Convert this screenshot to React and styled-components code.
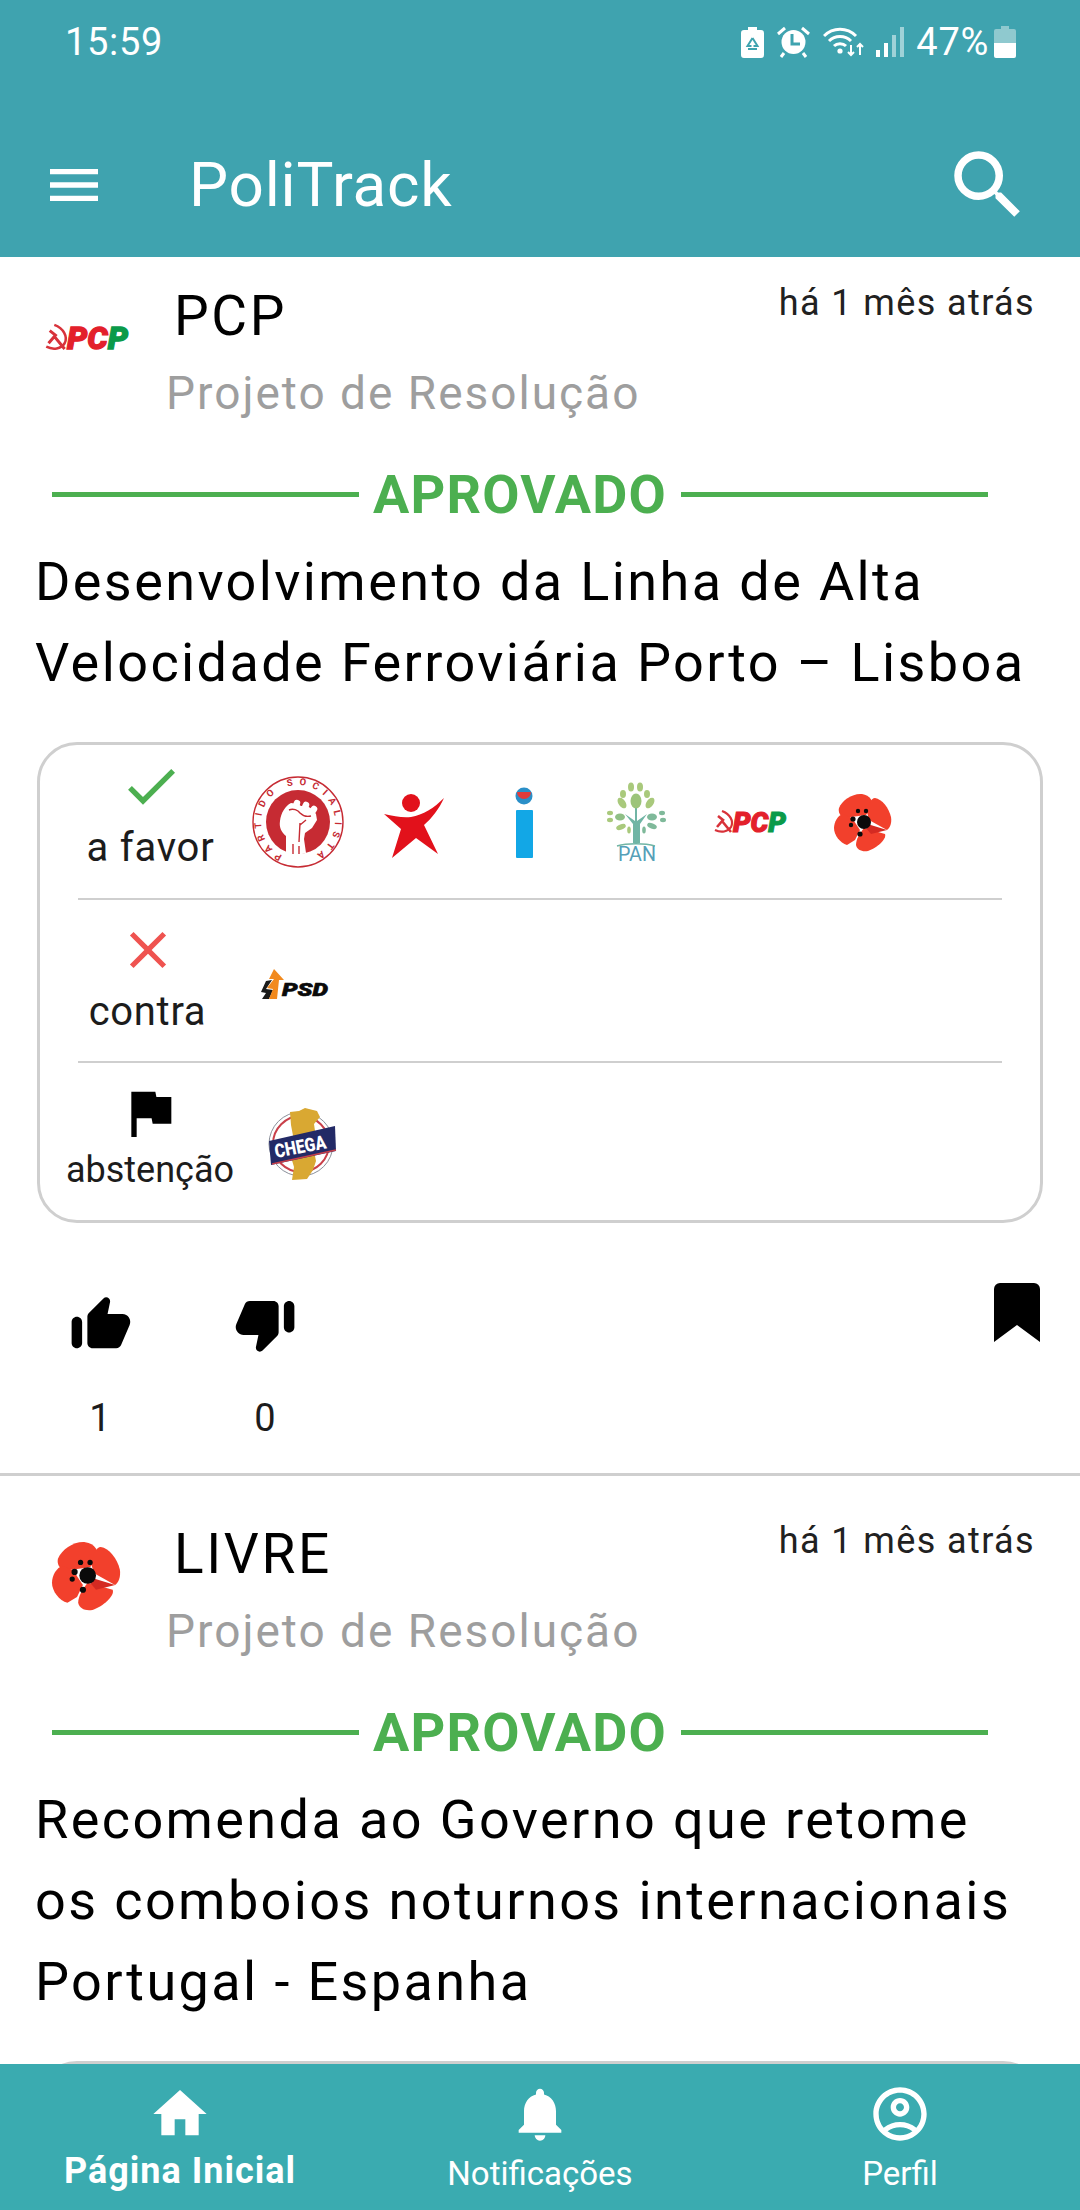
import React from "react";
import styled, { createGlobalStyle } from "styled-components";
import {
  MdMenu,
  MdSearch,
  MdHome,
  MdNotifications,
  MdOutlineAccountCircle,
  MdCheck,
  MdClose,
  MdFlag,
} from "react-icons/md";

const GlobalStyle = createGlobalStyle`
  html, body {
    margin: 0;
    padding: 0;
    background: #ffffff;
    font-family: Roboto, "Liberation Sans", sans-serif;
  }
  * { box-sizing: border-box; }
`;

const Screen = styled.div`
  width: 1080px;
  height: 2210px;
  display: flex;
  flex-direction: column;
  overflow: hidden;
  background: #ffffff;
  color: #000000;
`;

const Header = styled.header`
  flex: none;
  height: 257px;
  background: #3fa3af;
  color: #ffffff;
`;

const StatusBar = styled.div`
  height: 84px;
  padding: 0 64px 0 65px;
  display: flex;
  align-items: center;
  font-size: 38px;
  letter-spacing: 0.7px;
`;

const StatusIcons = styled.div`
  margin-left: auto;
  display: flex;
  align-items: center;
  gap: 12px;
`;

const Percent = styled.span`
  margin-left: 0;
  margin-right: -7px;
`;

const Toolbar = styled.div`
  height: 173px;
  padding: 28px 47px 0 42px;
  display: flex;
  align-items: center;
`;

const Brand = styled.div`
  margin-left: 83px;
  font-size: 62px;
  line-height: 70px;
  letter-spacing: 0.8px;
`;

const SearchButton = styled.div`
  margin-left: auto;
  display: flex;
`;

const Feed = styled.main`
  flex: 1;
  min-height: 0;
  overflow: hidden;
`;

const Card = styled.article`
  padding: ${(props) => props.$top}px 32px 0;
`;

const HeadRow = styled.div`
  display: flex;
  align-items: flex-start;
`;

const LogoSlot = styled.div`
  flex: none;
  width: 108px;
  height: 102px;
  margin-right: 26px;
  display: flex;
  align-items: center;
  justify-content: center;
`;

const HeadText = styled.div`
  flex: 1;
`;

const PartyName = styled.div`
  padding-left: 8px;
  font-size: 55px;
  line-height: 60px;
  letter-spacing: 2.6px;
`;

const ProposalType = styled.div`
  margin-top: 17px;
  font-size: 46px;
  line-height: 60px;
  letter-spacing: 2px;
  color: #9e9e9e;
`;

const TimeAgo = styled.div`
  margin: -5px 13px 0 0;
  font-size: 36px;
  line-height: 44px;
  letter-spacing: 1.4px;
  color: #212121;
`;

const StatusRow = styled.div`
  margin: 41px 60px 0 20px;
  height: 60px;
  display: flex;
  align-items: center;
  gap: 14px;
  color: #4caf50;
  font-size: 54px;
  font-weight: 700;
  letter-spacing: 1.2px;
`;

const StatusLine = styled.div`
  flex: 1;
  height: 5px;
  background: #4caf50;
`;

const Title = styled.h2`
  margin: 17px 0 0 3px;
  font-size: 54px;
  line-height: 81px;
  font-weight: 400;
  letter-spacing: 2.4px;
`;

const VoteBox = styled.section`
  margin: 39px 5px 0;
  min-height: 300px;
  border: 3px solid #cfcfcf;
  border-radius: 40px;
`;

const VoteRow = styled.div`
  height: ${(props) => props.$height}px;
  padding-left: 25px;
  display: flex;
`;

const VoteLabel = styled.div`
  flex: none;
  width: 165px;
  padding-top: ${(props) => props.$pad}px;
  padding-left: ${(props) => props.$shift}px;
  display: flex;
  flex-direction: column;
  align-items: center;
  gap: ${(props) => props.$gap}px;
  white-space: nowrap;
  font-size: ${(props) => props.$size}px;
  letter-spacing: ${(props) => props.$spacing}px;
  line-height: 40px;
  color: #1c1c1c;
`;

const LogoList = styled.div`
  margin-left: 18px;
  display: flex;
  align-items: center;
  gap: 13px;
`;

const LogoCell = styled.svg`
  display: block;
  flex: none;
  width: ${(props) => props.$size || 100}px;
  height: ${(props) => props.$size || 100}px;
`;

const RowDivider = styled.hr`
  margin: 0 38px;
  height: 2px;
  border: none;
  background: #cfcfcf;
`;

const Actions = styled.div`
  margin-top: 70px;
  padding-bottom: 33px;
  display: flex;
  align-items: flex-start;
`;

const Reaction = styled.div`
  width: 100px;
  margin-left: ${(props) => props.$offset}px;
  display: flex;
  flex-direction: column;
  align-items: center;
  font-size: 38px;
  line-height: 44px;
  color: #1c1c1c;
`;

const ThumbIcon = styled.svg`
  display: block;
  width: 63px;
  height: 63px;
  margin-bottom: 40px;
  transform: ${(props) => (props.$down ? "rotate(180deg)" : "none")};
`;

const BookmarkIcon = styled.svg`
  display: block;
  width: 46px;
  height: 59px;
  margin: -10px 8px 0 auto;
`;

const CardDivider = styled.hr`
  margin: 0;
  height: 3px;
  border: none;
  background: #cfcfcf;
`;

const BottomNav = styled.nav`
  flex: none;
  height: 146px;
  padding-top: 18px;
  background: #3aabb0;
  color: #ffffff;
  display: grid;
  grid-template-columns: repeat(3, 1fr);
`;

const Tab = styled.div`
  display: flex;
  flex-direction: column;
  align-items: center;
`;

const TabLabel = styled.div`
  margin-top: ${(props) => (props.$active ? 5 : 8)}px;
  font-size: ${(props) => (props.$active ? 36 : 33)}px;
  font-weight: ${(props) => (props.$active ? 700 : 400)};
  letter-spacing: ${(props) => (props.$active ? 1 : 0)}px;
  line-height: 40px;
`;

const BatteryRecycle = () => (
  <svg width="23" height="31" viewBox="0 0 23 31">
    <path fill="#fff" d="M7 0h9v3h4a3 3 0 0 1 3 3v22a3 3 0 0 1-3 3H3a3 3 0 0 1-3-3V6a3 3 0 0 1 3-3h4z" />
    <path fill="none" stroke="#3fa3af" strokeWidth="2" d="M11.5 11l-5 8h4M11.5 11l5 8h-4M7 22h9" />
  </svg>
);

const AlarmIcon = () => (
  <svg width="35" height="32" viewBox="0 0 35 32">
    <circle cx="17.5" cy="16" r="12" fill="#fff" />
    <path fill="none" stroke="#fff" strokeWidth="3" d="M2 8l7-6M33 8l-7-6M8 27l-3 4M27 27l3 4" />
    <path fill="none" stroke="#3fa3af" strokeWidth="3" d="M16 8v10h8" />
  </svg>
);

const WifiIcon = () => (
  <svg width="41" height="30" viewBox="0 0 41 30">
    <path fill="none" stroke="#fff" strokeWidth="3" d="M1 9c9-9 23-9 32 0M6 14c6-6 16-6 22 0M11 19c3-3 9-3 12 0" />
    <circle cx="17" cy="24" r="2.6" fill="#fff" />
    <path fill="none" stroke="#fff" strokeWidth="2" d="M28 18v10M25 25l3 3 3-3M37 28V17M34 20l3-3 3 3" />
  </svg>
);

const SignalIcon = () => (
  <svg width="28" height="30" viewBox="0 0 28 30">
    <rect x="0" y="23" width="4" height="7" fill="#fff" />
    <rect x="8" y="16" width="4" height="14" fill="#fff" />
    <rect x="16" y="8" width="4" height="22" fill="#9fd2d8" />
    <rect x="24" y="0" width="4" height="30" fill="#9fd2d8" />
  </svg>
);

const BatteryIcon = () => (
  <svg width="22" height="32" viewBox="0 0 22 32">
    <path fill="#8fc9cf" d="M7 0h8v3h5a2 2 0 0 1 2 2v12H0V5a2 2 0 0 1 2-2h5z" />
    <path fill="#fff" d="M0 17h22v13a2 2 0 0 1-2 2H2a2 2 0 0 1-2-2z" />
  </svg>
);

const PSLogo = () => (
  <LogoCell viewBox="0 0 100 100">
    <defs>
      <path id="ps-arc" d="M50 87a37 37 0 1 1 .1 0" />
    </defs>
    <circle cx="50" cy="50" r="45" fill="#fff" stroke="#c62b33" strokeWidth="1.4" />
    <circle cx="50" cy="50" r="32" fill="#c62b33" />
    <text fill="#c62b33" fontFamily="Roboto, sans-serif" fontWeight="700" fontSize="9.5">
      <textPath href="#ps-arc" startOffset="7%" textLength="196">PARTIDO SOCIALISTA</textPath>
    </text>
    <path
      fill="#fff"
      d="M38 82V64c-5-4-7-9-6-15 1-8 5-15 11-18l7 1 3 2 6 0 5 3 4 5 1 6-5 8-7 5-1 6 2 14c-6 2-14 2-20 1z"
    />
    <g fill="none" stroke="#fff" strokeWidth="6.5" strokeLinecap="round">
      <path d="M46 40l3-9M54 42l4-9M61 45l5-8" />
    </g>
    <path fill="none" stroke="#c62b33" strokeWidth="1.4" d="M41 38c4-2 9 0 11 3 3 3 7 4 11 3M52 51l-1 19M58 48l-6 5M45 82V72M51 82V74" />
  </LogoCell>
);

const BELogo = () => (
  <LogoCell viewBox="0 0 100 100">
    <circle cx="50" cy="31" r="9" fill="#e2111b" />
    <path
      fill="#e2111b"
      d="M23 42c10 2 18 4 27 3 12-2 23-9 33-19-5 11-12 20-20 27l14 29-22-16-24 20 9-29z"
    />
  </LogoCell>
);

const ILLogo = () => (
  <LogoCell viewBox="0 0 100 100">
    <circle cx="50" cy="24" r="8.5" fill="#2a8fc8" />
    <path fill="#e23b3b" d="M43 20h14a7 7 0 0 1-14 0z" />
    <rect x="42" y="38" width="17" height="48" rx="1" fill="#12a7e6" />
  </LogoCell>
);

const PANLogo = () => (
  <LogoCell viewBox="0 0 100 100">
    <path fill="#70b5a5" d="M46 71V52l-8-10 10 7V36h2v13l10-7-7 10v19z" />
    <path fill="none" stroke="#70b5a5" strokeWidth="1.4" d="M30 74c10-3 28-3 38 0" />
    <g fill="#a9c97c">
      <ellipse cx="44" cy="15" rx="3" ry="4.5" />
      <ellipse cx="53" cy="15" rx="3" ry="4.5" />
      <ellipse cx="36" cy="22" rx="3" ry="4" />
      <ellipse cx="60" cy="22" rx="3" ry="4" />
      <ellipse cx="49" cy="29" rx="5.5" ry="7.5" fill="#9cc47a" />
      <ellipse cx="35" cy="31" rx="3.5" ry="6" transform="rotate(-35 35 31)" />
      <ellipse cx="63" cy="31" rx="3.5" ry="6" transform="rotate(35 63 31)" />
      <ellipse cx="33" cy="45" rx="5" ry="3.5" fill="#8fbf86" />
      <ellipse cx="65" cy="45" rx="5" ry="3.5" fill="#7fb99a" />
      <ellipse cx="23" cy="41" rx="3" ry="2.2" />
      <ellipse cx="23" cy="48" rx="3" ry="2.2" />
      <ellipse cx="75" cy="41" rx="3" ry="2.2" fill="#7fb99a" />
      <ellipse cx="76" cy="48" rx="3" ry="2.2" fill="#7fb99a" />
      <ellipse cx="34" cy="55" rx="5" ry="2.6" transform="rotate(-20 34 55)" />
      <ellipse cx="65" cy="54" rx="5" ry="2.6" transform="rotate(20 65 54)" fill="#7fb99a" />
      <ellipse cx="42" cy="58" rx="1.8" ry="3.6" />
      <ellipse cx="57" cy="58" rx="1.8" ry="3.6" fill="#7fb99a" />
    </g>
    <text x="31" y="89" fill="#559fb8" fontFamily="Roboto, sans-serif" fontSize="20" textLength="38" lengthAdjust="spacingAndGlyphs">PAN</text>
  </LogoCell>
);

const PCPLogo = ({ size }) => (
  <LogoCell viewBox="0 0 100 100" $size={size}>
    <path fill="none" stroke="#d8323a" strokeWidth="2.2" d="M22 39c8 3 12 10 9 16-3 5-10 6-16 3" />
    <path fill="none" stroke="#d8323a" strokeWidth="2.6" d="M18 44l5 4-6 7M22 49l9 11" />
    <text x="33" y="60" fontFamily="Roboto, sans-serif" fontStyle="italic" fontWeight="900" fontSize="28" strokeWidth="1.1" textLength="53" lengthAdjust="spacingAndGlyphs">
      <tspan fill="#e3202b" stroke="#e3202b">PC</tspan>
      <tspan fill="#0a9a4a" stroke="#0a9a4a">P</tspan>
    </text>
  </LogoCell>
);

const LivreLogo = ({ size }) => (
  <LogoCell viewBox="0 0 100 100" $size={size}>
    <g fill="#f2402c">
      <path d="M26 36c3-8 14-15 23-14 8 1 12 8 10 13l-6 8-22 3c-4-2-6-6-5-10z" />
      <path d="M62 26c7 1 14 10 16 19 1 6-1 11-4 13l-18-10-2-8c1-7 4-14 8-14z" />
      <path d="M72 62c2 5-8 14-17 17-6 1-11-1-12-6 0-6 4-12 8-17z" />
      <path d="M21 56c0-6 4-13 9-14l9 4 8 12-5 10-8 5c-7-2-13-10-13-17z" />
    </g>
    <path fill="#d42a22" d="M48 50l26 8-16 4z" />
    <circle cx="51" cy="50" r="7" fill="#0a0a0a" />
    <circle cx="40" cy="47" r="2.6" fill="#0a0a0a" />
    <circle cx="38" cy="53" r="2.2" fill="#0a0a0a" />
    <circle cx="45" cy="39" r="2.2" fill="#0a0a0a" />
    <circle cx="53" cy="39" r="2.2" fill="#0a0a0a" />
    <circle cx="47" cy="62" r="2.6" fill="#0a0a0a" />
  </LogoCell>
);

const PSDLogo = () => (
  <LogoCell viewBox="0 0 100 100">
    <path fill="#1a1a1a" d="M18 50l6-1-6 9 7 1-4 9h-7l4-6-5-1z" />
    <path fill="#f28a1e" d="M26 38l10 11h-5l-2 19h-8l4-10-6-1 7-9h-5z" />
    <text x="34" y="65" fontFamily="Roboto, sans-serif" fontStyle="italic" fontWeight="900" fontSize="18" stroke="#0a0a0a" strokeWidth="0.6" textLength="46" lengthAdjust="spacingAndGlyphs" fill="#0a0a0a">PSD</text>
  </LogoCell>
);

const ChegaLogo = () => (
  <LogoCell viewBox="0 0 100 100">
    <circle cx="53" cy="52" r="32" fill="none" stroke="#8a8f9a" strokeWidth="1" />
    <circle cx="53" cy="52" r="28" fill="none" stroke="#c9404a" strokeWidth="2" />
    <path fill="#d9a832" d="M42 20l9-1 6-3 12 3 3 6-6 7 2 14-2 13 2 10-3 9-6 9-15 1 2-13-3-10 3-16-3-16z" />
    <path fill="#232a66" d="M21 49l66-15 1 25-65 14z" />
    <path fill="none" stroke="#c9404a" strokeWidth="1.5" d="M24 72l64-14" />
    <text x="28" y="66" transform="rotate(-11 28 66)" fill="#ffffff" fontFamily="Roboto, sans-serif" fontWeight="900" fontSize="19" textLength="52" lengthAdjust="spacingAndGlyphs">CHEGA</text>
  </LogoCell>
);

const ThumbPath =
  "M13.12 2.06L7.58 7.6c-.37.37-.58.88-.58 1.41V19c0 1.1.9 2 2 2h9c.8 0 1.52-.48 1.84-1.21l3.26-7.61C23.94 10.2 22.49 8 20.34 8h-5.65l.95-4.58c.1-.5-.05-1.01-.41-1.37-.59-.58-1.53-.58-2.11.01zM3 21c1.1 0 2-.9 2-2v-8c0-1.1-.9-2-2-2s-2 .9-2 2v8c0 1.1.9 2 2 2z";

function VotePanel({ votes }) {
  return (
    <VoteBox>
      {votes.map((vote, index) => (
        <React.Fragment key={vote.label}>
          {index > 0 && <RowDivider />}
          <VoteRow $height={vote.height}>
            <VoteLabel
              $pad={vote.pad}
              $gap={vote.gap}
              $size={vote.size}
              $spacing={vote.spacing}
              $shift={vote.shift}
            >
              {vote.icon}
              <span>{vote.label}</span>
            </VoteLabel>
            <LogoList>
              {vote.parties.map((Logo, i) => (
                <Logo key={i} />
              ))}
            </LogoList>
          </VoteRow>
        </React.Fragment>
      ))}
    </VoteBox>
  );
}

function Proposal({ top, logo, party, title, votes, likes, dislikes }) {
  return (
    <Card $top={top}>
      <HeadRow>
        <LogoSlot>{logo}</LogoSlot>
        <HeadText>
          <PartyName>{party}</PartyName>
          <ProposalType>Projeto de Resolução</ProposalType>
        </HeadText>
        <TimeAgo>há 1 mês atrás</TimeAgo>
      </HeadRow>
      <StatusRow>
        <StatusLine />
        APROVADO
        <StatusLine />
      </StatusRow>
      <Title>{title}</Title>
      <VotePanel votes={votes} />
      {likes !== undefined && (
        <Actions>
          <Reaction $offset={18}>
            <ThumbIcon viewBox="0 0 24 24" fill="#000">
              <path d={ThumbPath} />
            </ThumbIcon>
            {likes}
          </Reaction>
          <Reaction $offset={65}>
            <ThumbIcon viewBox="0 0 24 24" fill="#000" $down>
              <path d={ThumbPath} />
            </ThumbIcon>
            {dislikes}
          </Reaction>
          <BookmarkIcon viewBox="0 0 46 59" fill="#000">
            <path d="M0 6a6 6 0 0 1 6-6h34a6 6 0 0 1 6 6v53L23 42 0 59z" />
          </BookmarkIcon>
        </Actions>
      )}
    </Card>
  );
}

const firstVotes = [
  {
    label: "a favor",
    height: 153,
    pad: 9,
    gap: 10,
    size: 40,
    spacing: 0.8,
    shift: 6,
    icon: <MdCheck size={64} color="#4caf50" />,
    parties: [PSLogo, BELogo, ILLogo, PANLogo, () => <PCPLogo />, () => <LivreLogo />],
  },
  {
    label: "contra",
    height: 161,
    pad: 19,
    gap: 11,
    size: 40,
    spacing: 0.7,
    shift: 0,
    icon: <MdClose size={62} color="#ef5350" />,
    parties: [PSDLogo],
  },
  {
    label: "abstenção",
    height: 157,
    pad: 18,
    gap: 5,
    size: 36,
    spacing: 0,
    shift: 5,
    icon: <MdFlag size={64} color="#000" />,
    parties: [ChegaLogo],
  },
];

export default function App() {
  return (
    <Screen>
      <GlobalStyle />
      <Header>
        <StatusBar>
          15:59
          <StatusIcons>
            <BatteryRecycle />
            <AlarmIcon />
            <WifiIcon />
            <SignalIcon />
            <Percent>47%</Percent>
            <BatteryIcon />
          </StatusIcons>
        </StatusBar>
        <Toolbar>
          <MdMenu size={64} />
          <Brand>PoliTrack</Brand>
          <SearchButton>
            <MdSearch size={90} />
          </SearchButton>
        </Toolbar>
      </Header>
      <Feed>
        <Proposal
          top={29}
          logo={<PCPLogo size={115} />}
          party="PCP"
          title={
            <>
              Desenvolvimento da Linha de Alta
              <br />
              Velocidade Ferroviária Porto – Lisboa
            </>
          }
          votes={firstVotes}
          likes={1}
          dislikes={0}
        />
        <CardDivider />
        <Proposal
          top={48}
          logo={<LivreLogo size={119} />}
          party="LIVRE"
          title={
            <>
              Recomenda ao Governo que retome
              <br />
              os comboios noturnos internacionais
              <br />
              Portugal - Espanha
            </>
          }
          votes={[]}
        />
      </Feed>
      <BottomNav>
        <Tab>
          <MdHome size={64} />
          <TabLabel $active>Página Inicial</TabLabel>
        </Tab>
        <Tab>
          <MdNotifications size={64} />
          <TabLabel>Notificações</TabLabel>
        </Tab>
        <Tab>
          <MdOutlineAccountCircle size={64} />
          <TabLabel>Perfil</TabLabel>
        </Tab>
      </BottomNav>
    </Screen>
  );
}
